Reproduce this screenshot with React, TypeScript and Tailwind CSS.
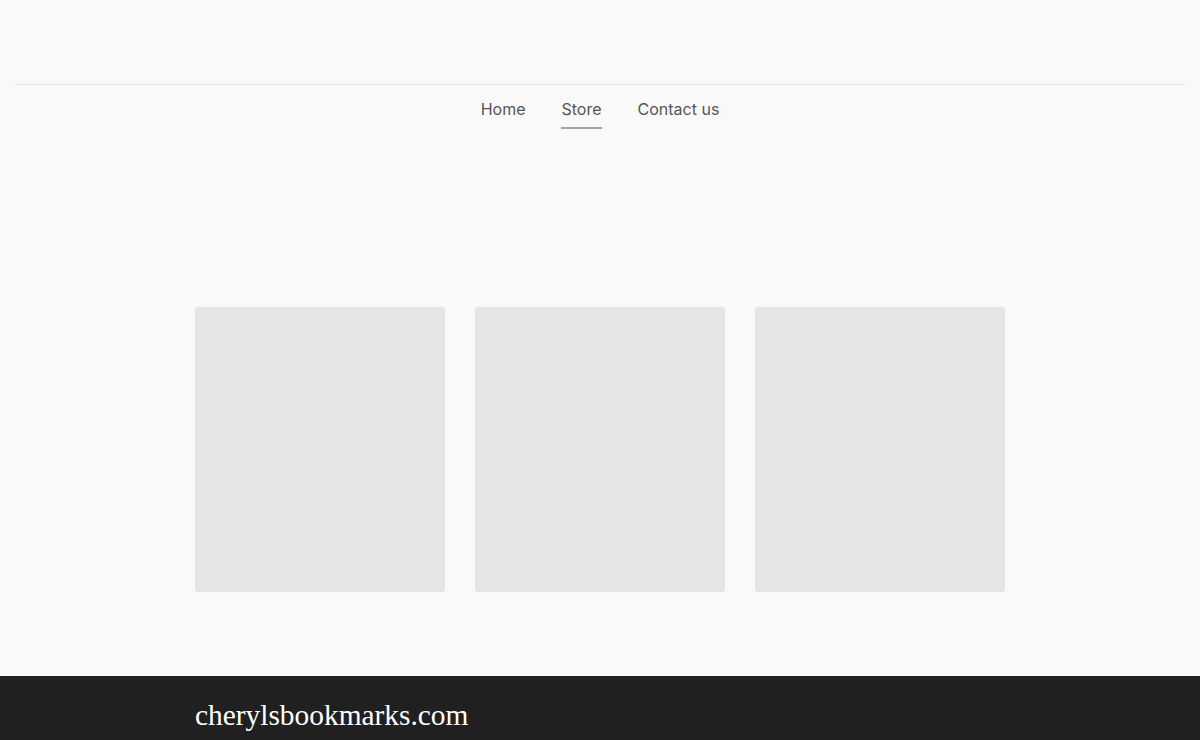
import React from 'react';

const navItems = [
  { label: 'Home', active: false },
  { label: 'Store', active: true },
  { label: 'Contact us', active: false },
];

export default function App() {
  return (
    <div className="min-h-[740px] bg-[#f9f9f9] flex flex-col" style={{ fontFamily: 'Inter, "Noto Sans", sans-serif' }}>
      <header className="h-[85px] mx-[15px] border-b border-[#e2e2e2]" />
      <nav className="flex justify-center gap-9 pt-[14px] h-[222px]">
        {navItems.map((item) => (
          <a
            key={item.label}
            className={`text-[16px] leading-[20px] text-[#555] h-[30px] border-b-2 ${item.active ? 'border-[#9aa7b3]' : 'border-transparent'}`}
          >
            {item.label}
          </a>
        ))}
      </nav>

      <main className="flex justify-center gap-[30px] pb-[84px]">
        {[0, 1, 2].map((i) => (
          <div key={i} className="w-[250px] h-[285px] bg-[#e5e5e5] rounded-[3px]" />
        ))}
      </main>

      <footer className="bg-[#202020] h-[64px] mt-auto">
        <div className="w-[810px] mx-auto pt-[23px]">
          <span className="text-white text-[29.4px] leading-[32px]" style={{ fontFamily: '"Liberation Serif", serif' }}>
            cherylsbookmarks.com
          </span>
        </div>
      </footer>
    </div>
  );
}
